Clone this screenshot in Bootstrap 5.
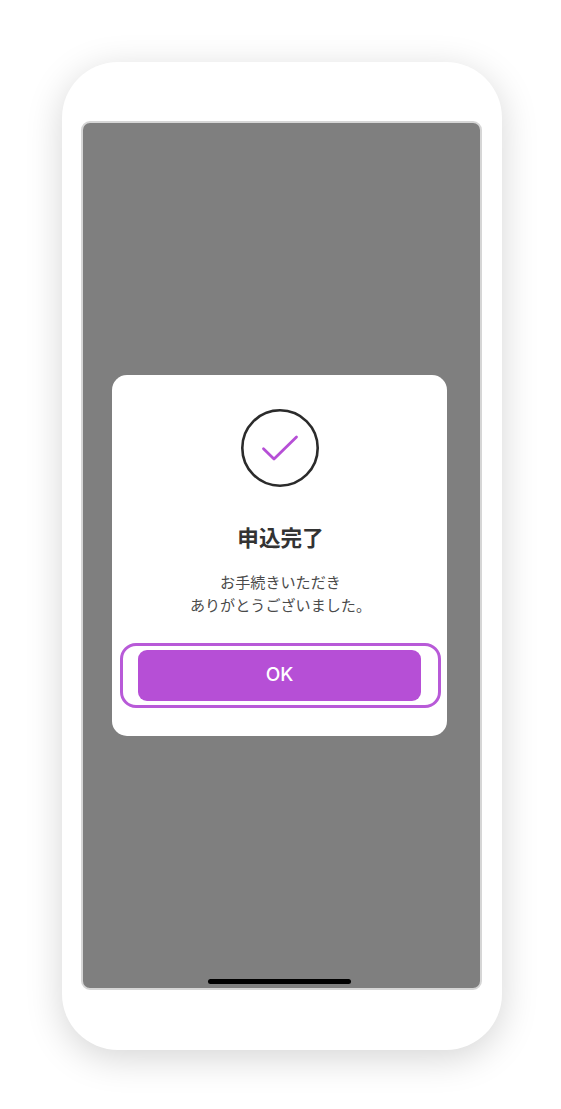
<!DOCTYPE html>
<html lang="ja">
<head>
<meta charset="utf-8">
<title>申込完了</title>
<link href="https://cdn.jsdelivr.net/npm/bootstrap@5.3.0/dist/css/bootstrap.min.css" rel="stylesheet">
<style>
html, body { height: 100%; }
body { background: #fff; overflow: hidden; padding: 62px 0 0 62px; font-family: "Liberation Sans", "Noto Sans CJK JP", sans-serif; }
.phone-shell { width: 440px; height: 988px; padding: 59px 20px 60px 19px; background: #fff; border-radius: 56px; box-shadow: 0 8px 36px rgba(0,0,0,.17); }
.phone-screen { height: 100%; background: #7f7f7f; border: 2px solid #d6d6d6; border-radius: 9px; }
.home-bar { left: 124.5px; bottom: 4.5px; width: 143px; height: 5px; background: #000; border-radius: 3px; }
.dialog-box { width: 335px; height: 361px; margin-right: 4px; padding: 34px 6px 28px 8px; background: #fff; border-radius: 15px; }
.check-icon { width: 80px; height: 78px; display: block; margin-left: -2px; }
.dialog-title { margin: 35px 0 0; font-size: 21.6px; line-height: 30px; font-weight: 700; color: #333; font-family: "Noto Sans CJK JP", sans-serif; }
.dialog-text { margin: 18px 0 0; font-size: 15.1px; line-height: 23px; color: #4a4a4a; font-family: "Noto Sans CJK JP", sans-serif; }
.focus-frame { width: 321px; height: 65px; margin-top: 27px; padding: 4px 17px 4px 15px; border: 3px solid #b85ad8; border-radius: 16px; }
.ok-btn { height: 100%; background: #b64fd6; color: #fff; border: 0; border-radius: 9px; font-size: 19px; font-family: "Inter", "Liberation Sans", sans-serif; font-weight: 500; }
.ok-btn:hover, .ok-btn:active { background: #b64fd6 !important; color: #fff !important; }
</style>
</head>
<body>
<div class="phone-shell">
  <div class="phone-screen position-relative d-flex align-items-center justify-content-center">
    <div class="dialog-box d-flex flex-column align-items-center text-center">
      <svg class="check-icon" viewBox="0 0 80 78" aria-hidden="true">
        <circle cx="40" cy="39" r="37.7" fill="none" stroke="#2b2b2b" stroke-width="2.6"/>
        <path d="M23.5 39.8 L34 50 L56.5 28" fill="none" stroke="#b64fd6" stroke-width="2.8" stroke-linecap="round" stroke-linejoin="round"/>
      </svg>
      <h1 class="dialog-title">申込完了</h1>
      <p class="dialog-text">お手続きいただき<br>ありがとうございました。</p>
      <div class="focus-frame flex-shrink-0">
        <button type="button" class="btn ok-btn w-100 d-flex align-items-center justify-content-center">OK</button>
      </div>
    </div>
    <div class="home-bar position-absolute"></div>
  </div>
</div>
<script src="https://cdn.jsdelivr.net/npm/bootstrap@5.3.0/dist/js/bootstrap.bundle.min.js"></script>
</body>
</html>
